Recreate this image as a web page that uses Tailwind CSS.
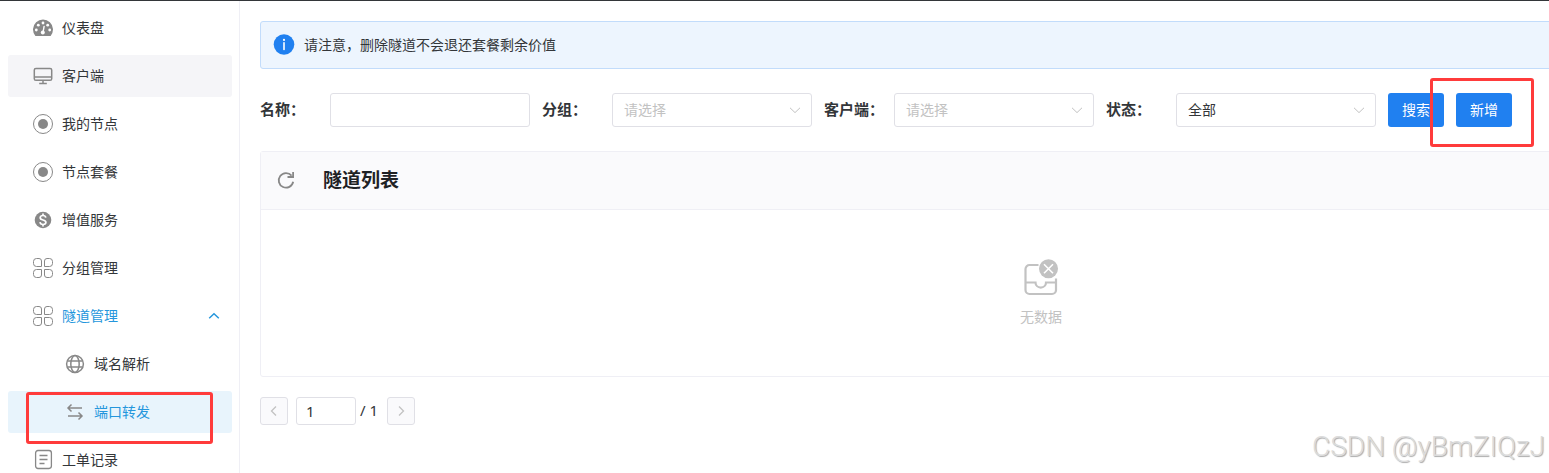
<!DOCTYPE html>
<html lang="zh-CN">
    <head>
        <meta charset="UTF-8" />
        <meta name="viewport" content="width=device-width, initial-scale=1.0" />
        <title>隧道列表</title>
        <script src="https://cdn.jsdelivr.net/npm/@tailwindcss/browser@4"></script>
    </head>
    <body
        class="relative flex h-screen flex-col overflow-hidden border-t border-[#333639] bg-white font-['Noto_Sans','Noto_Sans_CJK_SC',sans-serif] text-sm text-[#333639]"
    >
        <div class="flex min-h-0 flex-1 overflow-hidden">
            <!-- Sidebar -->
            <nav class="flex w-60 shrink-0 flex-col gap-1.5 border-r border-[#efeff5] pt-1.5 pr-[7px] pl-2">
                <a href="#" class="flex h-[42px] shrink-0 items-center gap-2 rounded-[3px] pl-6">
                    <svg class="size-[22px]" viewBox="0 0 22 22" fill="none">
                        <path d="M3.4 19A10 10 0 1 1 18.6 19Z" fill="#888" />
                        <g fill="#fff">
                            <circle cx="4.3" cy="13" r="1.4" />
                            <circle cx="6.3" cy="8.2" r="1.4" />
                            <circle cx="11" cy="6" r="1.4" />
                            <circle cx="15.7" cy="8.2" r="1.4" />
                            <circle cx="17.7" cy="13" r="1.4" />
                            <circle cx="10.8" cy="15.6" r="2" />
                        </g>
                        <path d="M11 15.5L12.1 9.4" stroke="#fff" stroke-width="1.4" stroke-linecap="round" />
                    </svg>
                    <span>仪表盘</span>
                </a>
                <a href="#" class="flex h-[42px] shrink-0 items-center gap-2 rounded-[3px] bg-[#f5f5f8] pl-6">
                    <svg class="size-[22px]" viewBox="0 0 22 22" fill="none" stroke="#888" stroke-width="1.5">
                        <rect x="2.3" y="3.5" width="17.4" height="11.8" rx="1.6" />
                        <path d="M2.3 12.1H19.7M11 15.5V18.3M7.2 18.5H14.8" />
                    </svg>
                    <span>客户端</span>
                </a>
                <a href="#" class="flex h-[42px] shrink-0 items-center gap-2 rounded-[3px] pl-6">
                    <svg class="size-[22px]" viewBox="0 0 22 22" fill="none">
                        <circle cx="11" cy="11" r="9.5" stroke="#888" />
                        <circle cx="11" cy="11" r="5" fill="#888" />
                    </svg>
                    <span>我的节点</span>
                </a>
                <a href="#" class="flex h-[42px] shrink-0 items-center gap-2 rounded-[3px] pl-6">
                    <svg class="size-[22px]" viewBox="0 0 22 22" fill="none">
                        <circle cx="11" cy="11" r="9.5" stroke="#888" />
                        <circle cx="11" cy="11" r="5" fill="#888" />
                    </svg>
                    <span>节点套餐</span>
                </a>
                <a href="#" class="flex h-[42px] shrink-0 items-center gap-2 rounded-[3px] pl-6">
                    <svg class="size-[22px]" viewBox="0 0 22 22" fill="none">
                        <circle cx="11" cy="11" r="8.3" fill="#888" />
                        <path
                            d="M13.8 8.6C13.5 7.2 12.4 6.5 11 6.5C9.3 6.5 8.2 7.4 8.2 8.7C8.2 10.1 9.4 10.6 11 11C12.6 11.4 13.9 11.9 13.9 13.3C13.9 14.7 12.6 15.5 11 15.5C9.3 15.5 8.2 14.7 8 13.2M11 4.5V6.5M11 15.5V17.5"
                            stroke="#fff"
                            stroke-width="1.7"
                        />
                    </svg>
                    <span>增值服务</span>
                </a>
                <a href="#" class="flex h-[42px] shrink-0 items-center gap-2 rounded-[3px] pl-6">
                    <svg class="size-[22px]" viewBox="0 0 22 22" fill="none" stroke="#888">
                        <path d="M4.5 1.5H7A2.5 2.5 0 0 1 9.5 4V9.5H4.5A3 3 0 0 1 1.5 6.5V4.5A3 3 0 0 1 4.5 1.5Z" />
                        <path d="M15 1.5H17.5A3 3 0 0 1 20.5 4.5V6.5A3 3 0 0 1 17.5 9.5H12.5V4A2.5 2.5 0 0 1 15 1.5Z" />
                        <path d="M4.5 12.5H9.5V18A2.5 2.5 0 0 1 7 20.5H4.5A3 3 0 0 1 1.5 17.5V15.5A3 3 0 0 1 4.5 12.5Z" />
                        <path d="M12.5 12.5H17.5A3 3 0 0 1 20.5 15.5V17.5A3 3 0 0 1 17.5 20.5H15A2.5 2.5 0 0 1 12.5 18Z" />
                    </svg>
                    <span>分组管理</span>
                </a>
                <a href="#" class="flex h-[42px] shrink-0 items-center gap-2 rounded-[3px] pr-3 pl-6 text-[#2496dc]">
                    <svg class="size-[22px]" viewBox="0 0 22 22" fill="none" stroke="#888">
                        <path d="M4.5 1.5H7A2.5 2.5 0 0 1 9.5 4V9.5H4.5A3 3 0 0 1 1.5 6.5V4.5A3 3 0 0 1 4.5 1.5Z" />
                        <path d="M15 1.5H17.5A3 3 0 0 1 20.5 4.5V6.5A3 3 0 0 1 17.5 9.5H12.5V4A2.5 2.5 0 0 1 15 1.5Z" />
                        <path d="M4.5 12.5H9.5V18A2.5 2.5 0 0 1 7 20.5H4.5A3 3 0 0 1 1.5 17.5V15.5A3 3 0 0 1 4.5 12.5Z" />
                        <path d="M12.5 12.5H17.5A3 3 0 0 1 20.5 15.5V17.5A3 3 0 0 1 17.5 20.5H15A2.5 2.5 0 0 1 12.5 18Z" />
                    </svg>
                    <span>隧道管理</span>
                    <svg class="ml-auto h-3 w-3" viewBox="0 0 12 12" fill="none" stroke="#2496dc" stroke-width="1.5">
                        <path d="M1.2 8.3L6 3.8L10.8 8.3" />
                    </svg>
                </a>
                <a href="#" class="flex h-[42px] shrink-0 items-center gap-2 rounded-[3px] pl-14">
                    <svg class="size-[22px]" viewBox="0 0 22 22" fill="none" stroke="#888" stroke-width="1.5">
                        <circle cx="11" cy="11" r="8.4" />
                        <ellipse cx="11" cy="11" rx="4.2" ry="8.4" />
                        <path d="M3.3 8H18.7M3.3 14H18.7" />
                    </svg>
                    <span>域名解析</span>
                </a>
                <a
                    href="#"
                    class="relative flex h-[42px] shrink-0 items-center gap-2 rounded-[3px] bg-[#e8f4fc] pl-14 text-[#2496dc]"
                >
                    <svg class="size-[22px]" viewBox="0 0 22 22" fill="none" stroke="#888" stroke-width="1.5">
                        <path d="M18 7H4.5M7.5 3.5L4 7L7.5 10.5M4 15H17.5M14.5 11.5L18 15L14.5 18.5" />
                    </svg>
                    <span>端口转发</span>
                    <span
                        class="pointer-events-none absolute top-px left-[18px] h-[52px] w-[187px] rounded-[3px] border-3 border-[#ff3b3b]"
                    ></span>
                </a>
                <a href="#" class="flex h-[42px] shrink-0 items-center gap-2 rounded-[3px] pl-6">
                    <svg class="size-[22px]" viewBox="0 0 22 22" fill="none" stroke="#888" stroke-width="1.3">
                        <rect x="3.6" y="1.5" width="15.8" height="18" rx="2.4" />
                        <path d="M7.5 6.5H15.5M7.5 10.5H15.5M7.5 14.5H12.5" />
                    </svg>
                    <span>工单记录</span>
                </a>
            </nav>

            <!-- Content, wider than small windows -->
            <main class="min-w-[1602px] flex-1 p-5">
                <div class="flex h-12 items-center gap-[9px] rounded-[3px] border border-[#c2dcfb] bg-[#edf5fe] px-3">
                    <svg class="size-[22px]" viewBox="0 0 22 22">
                        <circle cx="11" cy="10.5" r="10.3" fill="#2080f0" />
                        <circle cx="11" cy="5.9" r="1.1" fill="#fff" />
                        <path d="M11 8.8V15.5" stroke="#fff" stroke-width="1.6" stroke-linecap="round" />
                    </svg>
                    <span>请注意，删除隧道不会退还套餐剩余价值</span>
                </div>

                <form class="mt-6 flex items-center gap-3">
                    <div class="flex items-center">
                        <label for="name" class="w-[70px] text-[15px] font-bold">名称：</label>
                        <input id="name" type="text" class="h-[34px] w-50 rounded-[3px] border border-[#e0e0e6] px-3" />
                    </div>
                    <div class="flex items-center">
                        <label for="group" class="w-[70px] text-[15px] font-bold">分组：</label>
                        <div class="relative">
                            <select
                                id="group"
                                class="h-[34px] w-50 appearance-none rounded-[3px] border border-[#e0e0e6] bg-white px-[11px] text-[#c2c2c2]"
                            >
                                <option>请选择</option>
                            </select>
                            <svg class="pointer-events-none absolute top-[11px] right-[11px] h-3 w-3" viewBox="0 0 12 12" fill="none" stroke="#c2c2c2">
                                <path d="M1 3.8L6 8.6L11 3.8" />
                            </svg>
                        </div>
                    </div>
                    <div class="flex items-center">
                        <label for="client" class="w-[70px] text-[15px] font-bold">客户端：</label>
                        <div class="relative">
                            <select
                                id="client"
                                class="h-[34px] w-50 appearance-none rounded-[3px] border border-[#e0e0e6] bg-white px-[11px] text-[#c2c2c2]"
                            >
                                <option>请选择</option>
                            </select>
                            <svg class="pointer-events-none absolute top-[11px] right-[11px] h-3 w-3" viewBox="0 0 12 12" fill="none" stroke="#c2c2c2">
                                <path d="M1 3.8L6 8.6L11 3.8" />
                            </svg>
                        </div>
                    </div>
                    <div class="flex items-center">
                        <label for="status" class="w-[70px] text-[15px] font-bold">状态：</label>
                        <div class="relative">
                            <select
                                id="status"
                                class="h-[34px] w-50 appearance-none rounded-[3px] border border-[#e0e0e6] bg-white px-[11px]"
                            >
                                <option>全部</option>
                            </select>
                            <svg class="pointer-events-none absolute top-[11px] right-[11px] h-3 w-3" viewBox="0 0 12 12" fill="none" stroke="#c2c2c2">
                                <path d="M1 3.8L6 8.6L11 3.8" />
                            </svg>
                        </div>
                    </div>
                    <button type="button" class="h-[34px] rounded-[3px] bg-[#2080f0] px-3.5 text-white">搜索</button>
                    <div class="relative">
                        <button type="button" class="h-[34px] rounded-[3px] bg-[#2080f0] px-3.5 text-white">新增</button>
                        <span
                            class="pointer-events-none absolute -top-[15px] -left-[26px] h-[69px] w-[104px] rounded-[3px] border-3 border-[#ff3b3b]"
                        ></span>
                    </div>
                </form>

                <section class="mt-6 rounded-[3px] border border-[#efeff5]">
                    <header class="flex h-[58px] items-center gap-[26px] border-b border-[#efeff5] bg-[#fafafc] px-3.5">
                        <button type="button" aria-label="刷新">
                            <svg class="size-[22px]" viewBox="0 0 22 22" fill="none" stroke="#888" stroke-width="1.8">
                                <path d="M18.2 11.8A7.3 7.3 0 1 1 16.6 5.6" />
                                <path d="M18.1 2V7H12.5" />
                            </svg>
                        </button>
                        <h2 class="text-[19px] font-bold text-[#1f2225]">隧道列表</h2>
                    </header>
                    <div class="flex h-[166px] flex-col items-center justify-center gap-2 text-[#c2c2c2]">
                        <svg class="size-10" viewBox="0 0 40 40" fill="none">
                            <path
                                d="M17.5 6H8.5A4 4 0 0 0 4.5 10V31A4 4 0 0 0 8.5 35H31A4 4 0 0 0 35 31V19.5M4.5 23.5H14.5A5.2 5 0 0 0 25 23.5H35"
                                stroke="#c2c2c2"
                                stroke-width="2.2"
                            />
                            <circle cx="27.5" cy="9.8" r="9.5" fill="#c2c2c2" />
                            <path d="M23 5.3L32 14.3M32 5.3L23 14.3" stroke="#fff" stroke-width="1.6" />
                        </svg>
                        <p>无数据</p>
                    </div>
                </section>

                <div class="mt-5 flex items-center gap-2">
                    <button
                        type="button"
                        aria-label="上一页"
                        disabled
                        class="flex size-7 items-center justify-center rounded-[3px] border border-[#e0e0e6] bg-[#fafafc]"
                    >
                        <svg class="h-3 w-3" viewBox="0 0 12 12" fill="none" stroke="#c2c2c2" stroke-width="1.3">
                            <path d="M8 1.5L3.5 6L8 10.5" />
                        </svg>
                    </button>
                    <div class="flex items-center gap-1 text-[15px]">
                        <input
                            type="text"
                            value="1"
                            aria-label="页码"
                            class="h-7 w-15 rounded-[3px] border border-[#e0e0e6] px-[9px]"
                        />
                        <span class="w-[19px] whitespace-nowrap">/ 1</span>
                    </div>
                    <button
                        type="button"
                        aria-label="下一页"
                        disabled
                        class="flex size-7 items-center justify-center rounded-[3px] border border-[#e0e0e6] bg-[#fafafc]"
                    >
                        <svg class="h-3 w-3" viewBox="0 0 12 12" fill="none" stroke="#c2c2c2" stroke-width="1.3">
                            <path d="M4 1.5L8.5 6L4 10.5" />
                        </svg>
                    </button>
                </div>
            </main>
        </div>

        <!-- Watermark -->
        <p
            class="pointer-events-none absolute right-1 bottom-2 font-['Roboto',sans-serif] text-[28px] leading-9 font-light text-[#dcdcdc] [text-shadow:1px_1px_1px_#aaa]"
        >
            CSDN @yBmZIQzJ
        </p>
    </body>
</html>
